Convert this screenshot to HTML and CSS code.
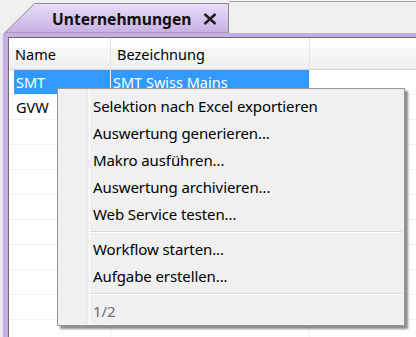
FILE: index.html
```html
<!DOCTYPE html>
<html lang="de">
<head>
    <meta charset="UTF-8">
    <title>Unternehmungen</title>
    <link rel="stylesheet" href="styles.css">
</head>
<body>
    <div class="app">
        <div class="tabstrip">
            <div class="tab">
                <svg class="tab-shape" width="230" height="33" viewBox="0 0 230 33">
                    <defs>
                        <linearGradient id="tabFill" x1="0" y1="0" x2="0" y2="1">
                            <stop offset="0" stop-color="#eadcfa"/>
                            <stop offset="1" stop-color="#c6b0e2"/>
                        </linearGradient>
                    </defs>
                    <polygon points="4.5,33 34.5,3.5 228.5,3.5 228.5,33" fill="url(#tabFill)" stroke="#8a8a8a" stroke-width="1"/>
                </svg>
                <span class="tab-title">Unternehmungen</span>
                <svg class="tab-close" width="14" height="12" viewBox="0 0 14 12">
                    <path d="M1.5 1 L12.5 11 M12.5 1 L1.5 11" stroke="#1c1c1c" stroke-width="2.4" fill="none"/>
                </svg>
            </div>
            <div class="tabstrip-rest"></div>
        </div>

        <div class="frame">
            <div class="grid">
                <div class="grid-head">
                    <div class="hcell col-name">Name</div>
                    <div class="hcell col-desc">Bezeichnung</div>
                    <div class="hcell col-rest"></div>
                </div>
                <div class="row selected">
                    <div class="cell col-name">SMT</div>
                    <div class="cell col-desc">SMT Swiss Mains</div>
                    <div class="cell col-rest"></div>
                </div>
                <div class="row">
                    <div class="cell col-name">GVW</div>
                    <div class="cell col-desc"></div>
                    <div class="cell col-rest"></div>
                </div>
                <div class="row"><div class="cell col-name"></div><div class="cell col-desc"></div><div class="cell col-rest"></div></div>
                <div class="row"><div class="cell col-name"></div><div class="cell col-desc"></div><div class="cell col-rest"></div></div>
                <div class="row"><div class="cell col-name"></div><div class="cell col-desc"></div><div class="cell col-rest"></div></div>
                <div class="row"><div class="cell col-name"></div><div class="cell col-desc"></div><div class="cell col-rest"></div></div>
                <div class="row"><div class="cell col-name"></div><div class="cell col-desc"></div><div class="cell col-rest"></div></div>
                <div class="row"><div class="cell col-name"></div><div class="cell col-desc"></div><div class="cell col-rest"></div></div>
                <div class="row"><div class="cell col-name"></div><div class="cell col-desc"></div><div class="cell col-rest"></div></div>
                <div class="row"><div class="cell col-name"></div><div class="cell col-desc"></div><div class="cell col-rest"></div></div>
                <div class="row"><div class="cell col-name"></div><div class="cell col-desc"></div><div class="cell col-rest"></div></div>
            </div>
        </div>

        <!-- context menu opened on the selected row -->
        <div class="context-menu">
            <div class="menu-item">Selektion nach Excel exportieren</div>
            <div class="menu-item">Auswertung generieren...</div>
            <div class="menu-item">Makro ausführen...</div>
            <div class="menu-item">Auswertung archivieren...</div>
            <div class="menu-item">Web Service testen...</div>
            <div class="menu-separator"></div>
            <div class="menu-item">Workflow starten...</div>
            <div class="menu-item">Aufgabe erstellen...</div>
            <div class="menu-separator"></div>
            <div class="menu-item disabled">1/2</div>
        </div>
    </div>
</body>
</html>
```

FILE: styles.css
```css
* {
    margin: 0;
    padding: 0;
    box-sizing: border-box;
}

body {
    font-family: 'Noto Sans', 'Open Sans', Arial, sans-serif;
    background-color: #e9e7f0;
    color: #000;
    overflow: hidden;
}

.app {
    position: relative;
    width: 416px;
    height: 337px;
    display: flex;
    flex-direction: column;
}

.tabstrip {
    display: flex;
    height: 33px;
    background-color: #f0f0f0;
}

.tab {
    position: relative;
    width: 229px;
    height: 33px;
    display: flex;
    align-items: center;
}

.tab-shape {
    position: absolute;
    left: 0;
    top: 0;
}

.tab-title {
    position: relative;
    margin-left: 52px;
    margin-top: 4px;
    font-size: 15.6px;
    font-weight: bold;
    color: #111;
}

.tab-close {
    position: relative;
    margin-left: 12px;
    margin-top: 4px;
}

.tabstrip-rest {
    flex: 1;
    margin-top: 1px;
    border-top: 1px solid #a5a5a5;
}

.frame {
    flex: 1;
    display: flex;
    margin-left: 3px;
    border-left: 5px solid #c4ade0;
    border-top: 4px solid #c4ade0;
}

.grid {
    flex: 1;
    background-color: #fff;
    border-left: 1px solid #6c6c6c;
    border-top: 1px solid #6c6c6c;
    font-size: 14.5px;
}

.grid-head {
    display: flex;
    height: 32px;
    border-bottom: 1px solid #d5d5d5;
    background: linear-gradient(to bottom, #ffffff 0%, #ffffff 30%, #f8f8f9 31%, #efeff1 100%);
}

.hcell {
    display: flex;
    align-items: center;
    padding-left: 6px;
    border-right: 1px solid #e3e3e3;
}

.row {
    display: flex;
    height: 25px;
    border-bottom: 1px solid #f0f0f0;
}

.cell {
    display: flex;
    align-items: center;
    padding-left: 2px;
    border-right: 1px solid #f0f0f0;
}

.hcell.col-name {
    width: 102px;
}

.cell.col-name {
    width: 97px;
    margin-left: 5px;
}

.col-desc {
    width: 199px;
}

.col-rest {
    flex: 1;
    border-right: none;
}

.row.selected .col-name,
.row.selected .col-desc {
    background-color: #3399ff;
    color: #fff;
}

.context-menu {
    position: absolute;
    left: 57px;
    top: 88px;
    width: 348px;
    height: 238px;
    padding: 4px 2px 2px 2px;
    background-color: #f0f0f0;
    border: 1px solid #979797;
    box-shadow: 3px 3px 2px rgba(0, 0, 0, 0.45);
    font-size: 15px;
    letter-spacing: -0.1px;
}

.context-menu::before {
    content: "";
    position: absolute;
    left: 28px;
    top: 0;
    bottom: 0;
    width: 2px;
    border-left: 1px solid #e2e3e3;
    border-right: 1px solid #ffffff;
}

.menu-item {
    height: 27px;
    line-height: 27px;
    padding-left: 33px;
    color: #000;
}

.menu-item.disabled {
    color: #6d6d6d;
}

.menu-separator {
    height: 8px;
    margin-left: 29px;
    display: flex;
    align-items: center;
}

.menu-separator::after {
    content: "";
    flex: 1;
    border-top: 1px solid #d7d7d7;
    border-bottom: 1px solid #ffffff;
}
```
